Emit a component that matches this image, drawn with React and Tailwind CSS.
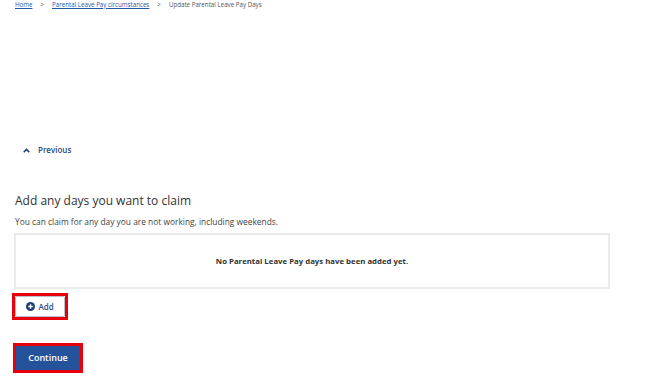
import React from 'react';

function PlusCircle() {
  return (
    <svg width="9" height="9" viewBox="0 0 16 16" className="shrink-0">
      <circle cx="8" cy="8" r="8" fill="#1d3f73" />
      <path d="M8 4v8M4 8h8" stroke="white" strokeWidth="2.4" />
    </svg>
  );
}

export default function App() {
  return (
    <div className="w-[650px] h-[386px] bg-white px-[15px] font-['Open_Sans',sans-serif] text-[#333]">
      <nav className="flex items-center h-[9px] text-[6.2px] leading-[8px] text-[#555]">
        <a className="underline text-[#1f5aa6]">Home</a>
        <span className="mx-[8px]">&gt;</span>
        <a className="underline text-[#1f5aa6]">Parental Leave Pay circumstances</a>
        <span className="mx-[8px]">&gt;</span>
        <span>Update Parental Leave Pay Days</span>
      </nav>

      <div className="mt-[136px] flex items-center h-[10px] pl-[8px] gap-[8px] text-[8px] font-semibold text-[#2a4a7f]">
        <svg width="7" height="5" viewBox="0 0 10 7">
          <path d="M1 6 L5 2 L9 6" stroke="#1d3f73" strokeWidth="2.2" fill="none" />
        </svg>
        <span>Previous</span>
      </div>

      <h2 className="mt-[38px] text-[12px] leading-[16px] text-[#333]">Add any days you want to claim</h2>
      <p className="mt-[8px] text-[8.4px] leading-[10px] text-[#444]">
        You can claim for any day you are not working, including weekends.
      </p>

      <div className="mt-[6px] w-[596px] h-[56px] -ml-[1px] border-2 border-[#ebebeb] flex items-center justify-center">
        <span className="text-[7.8px] font-bold text-[#333] mt-[2px]">No Parental Leave Pay days have been added yet.</span>
      </div>

      <div className="mt-[4px] -ml-[3px] w-[56px] h-[27px] border-[3px] border-[#e8000b] p-0">
        <button className="w-full h-full border border-[#b9c2cc] bg-white flex items-center justify-center gap-[3px] text-[8px] font-semibold text-[#2a4a7f] rounded-[2px]">
          <PlusCircle />
          <span>Add</span>
        </button>
      </div>

      <div className="mt-[23px] -ml-[2px] w-[70px] h-[30px] border-[3px] border-[#e8000b]">
        <button className="w-full h-full bg-[#24539c] text-white text-[9px] font-semibold flex items-center justify-center">
          Continue
        </button>
      </div>
    </div>
  );
}
